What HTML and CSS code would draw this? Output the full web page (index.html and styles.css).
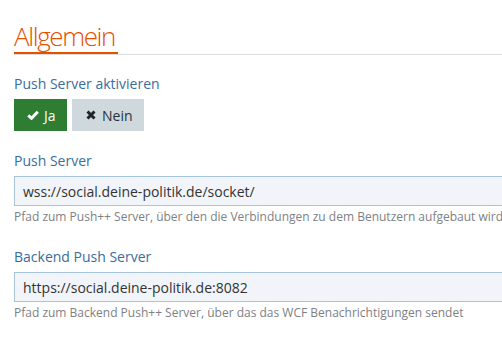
FILE: index.html
```html
<!DOCTYPE html>
<html lang="de">
<head>
	<meta charset="UTF-8">
	<title>Allgemein</title>
	<link rel="stylesheet" href="styles.css">
</head>
<body>

	<div class="page">
		<section class="section">
			<h2 class="sectionTitle"><span>Allgemein</span></h2>

			<dl class="option">
				<dt>Push Server aktivieren</dt>
				<dd>
					<div class="toggle">
						<button class="btn btnYes">
							<svg width="12" height="10" viewBox="0 0 12 10"><path d="M1.3 5.3 L4.5 8.3 L10.8 1.7" fill="none" stroke="#fff" stroke-width="3"/></svg>
							Ja
						</button>
						<button class="btn btnNo">
							<svg width="10" height="10" viewBox="0 0 10 10"><path d="M1.5 1.5 L8.5 8.5 M8.5 1.5 L1.5 8.5" fill="none" stroke="#1f2326" stroke-width="3"/></svg>
							Nein
						</button>
					</div>
				</dd>
			</dl>

			<dl class="option">
				<dt>Push Server</dt>
				<dd>
					<input class="field" type="text" value="wss://social.deine-politik.de/socket/">
					<small>Pfad zum Push++ Server, über den die Verbindungen zu dem Benutzern aufgebaut wird</small>
				</dd>
			</dl>

			<dl class="option">
				<dt>Backend Push Server</dt>
				<dd>
					<input class="field" type="text" value="https://social.deine-politik.de:8082">
					<small>Pfad zum Backend Push++ Server, über das das WCF Benachrichtigungen sendet</small>
				</dd>
			</dl>
		</section>
	</div>

</body>
</html>
```

FILE: styles.css
```css
*{
	margin: 0;
	padding: 0;
	box-sizing: border-box;
}
body{
	font-family: "Open Sans", "Liberation Sans", sans-serif;
	background: #fff;
}
.page{
	width: 100%;
	height: 100vh;
	overflow: hidden;
	padding: 20px 0 0 14px;
}
.section{
	width: 600px;
}
.sectionTitle{
	font-family: "Open Sans", sans-serif;
	font-size: 26px;
	font-weight: 300;
	letter-spacing: -1.4px;
	color: #e65100;
	line-height: 32px;
	border-bottom: 1px solid #ddd;
	padding-bottom: 1px;
}
.sectionTitle span{
	display: inline-block;
	padding-right: 3px;
	border-bottom: 2px solid #e65100;
	margin-bottom: -1px;
}
.option{
	margin-top: 19px;
}
.option dt{
	font-size: 14px;
	line-height: 20px;
	color: #3a6d9c;
	margin-bottom: 5px;
}
.option + .option{
	margin-top: 20px;
}
.option + .option + .option{
	margin-top: 22px;
}
.toggle{
	display: flex;
	gap: 5px;
}
.btn{
	display: flex;
	align-items: center;
	height: 32px;
	border: 0;
	font-family: inherit;
	font-size: 14px;
}
.btnYes{
	background: #2e7d32;
	color: #fff;
	width: 53px;
	padding-left: 13px;
	gap: 5px;
}
.btnNo{
	background: #cfd8dc;
	color: #263238;
	width: 72px;
	padding-left: 14px;
	gap: 6px;
}
.field{
	display: block;
	width: 100%;
	height: 30px;
	border: 1px solid #a8c5e0;
	background: #f1f5f9;
	font-family: inherit;
	font-size: 14px;
	color: #333;
	padding: 0 8px;
}
.option small{
	display: block;
	font-size: 12px;
	line-height: 16px;
	color: #7d8185;
	margin-top: 3px;
}
```
